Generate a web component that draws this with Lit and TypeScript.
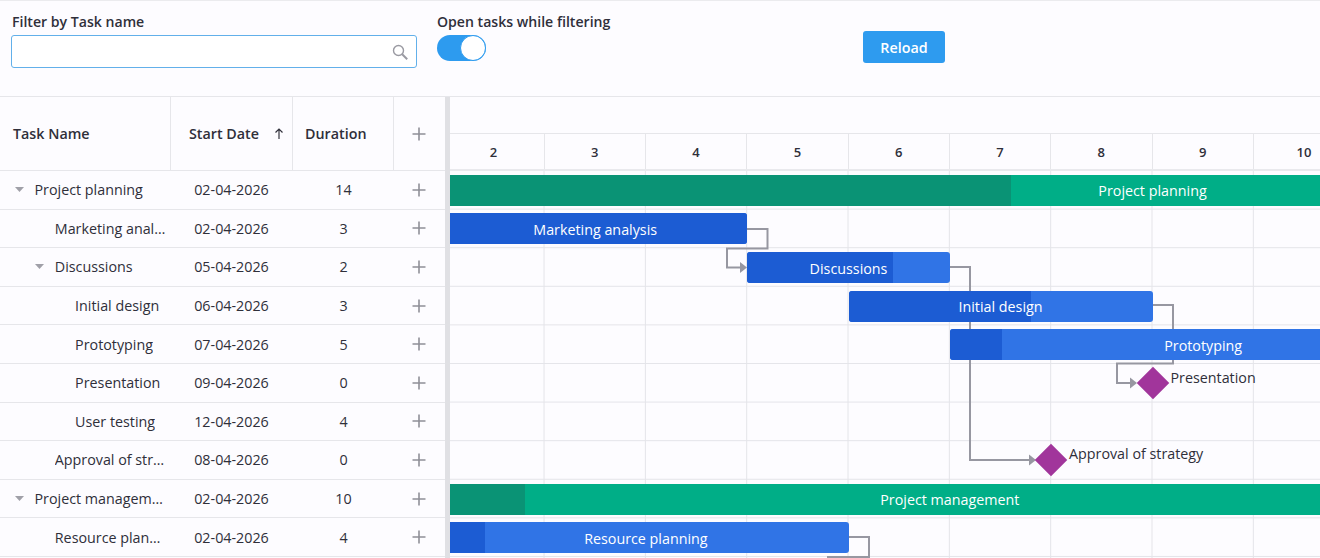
import { LitElement, html, css, svg } from "lit";
import { customElement } from "lit/decorators.js";

const ROW = 38.6;
const DAY = 101.33;
const ORIGIN = -6.8;
const BAR_INSET = 3.8;

interface Task { name: string; date: string; dur: number; level: number; open?: boolean; }
const TASKS: Task[] = [
  { name: "Project planning", date: "02-04-2026", dur: 14, level: 0, open: true },
  { name: "Marketing analysis", date: "02-04-2026", dur: 3, level: 1 },
  { name: "Discussions", date: "05-04-2026", dur: 2, level: 1, open: true },
  { name: "Initial design", date: "06-04-2026", dur: 3, level: 2 },
  { name: "Prototyping", date: "07-04-2026", dur: 5, level: 2 },
  { name: "Presentation", date: "09-04-2026", dur: 0, level: 2 },
  { name: "User testing", date: "12-04-2026", dur: 4, level: 2 },
  { name: "Approval of strategy", date: "08-04-2026", dur: 0, level: 1 },
  { name: "Project management", date: "02-04-2026", dur: 10, level: 0, open: true },
  { name: "Resource planning", date: "02-04-2026", dur: 4, level: 1 },
];

interface Bar { row: number; name: string; start: number; days: number; progress: number; kind: "project" | "task"; }
const BARS: Bar[] = [
  { row: 0, name: "Project planning", start: 0, days: 14, progress: 568, kind: "project" },
  { row: 1, name: "Marketing analysis", start: 0, days: 3, progress: 304, kind: "task" },
  { row: 2, name: "Discussions", start: 3, days: 2, progress: 146, kind: "task" },
  { row: 3, name: "Initial design", start: 4, days: 3, progress: 182, kind: "task" },
  { row: 4, name: "Prototyping", start: 5, days: 5, progress: 52, kind: "task" },
  { row: 8, name: "Project management", start: 0, days: 10, progress: 82, kind: "project" },
  { row: 9, name: "Resource planning", start: 0, days: 4, progress: 42, kind: "task" },
];

const MILESTONES = [
  { name: "Presentation", cx: 703, cy: 212, lx: 720.5, ly: 205.5 },
  { name: "Approval of strategy", cx: 601.3, cy: 289, lx: 619, ly: 282 },
];

const DAYS = [2, 3, 4, 5, 6, 7, 8, 9, 10];

const plus = html`<svg class="plus" width="14" height="14" viewBox="0 0 14 14"><path d="M7 .5v13M.5 7h13" fill="none" stroke="#8f8f98" stroke-width="1.6"/></svg>`;

@customElement("app-root")
export class AppRoot extends LitElement {
  static styles = css`
    :host { display: block; width: 1320px; height: 558px; overflow: hidden; background: #fdfcff; color: #2f2f3a;
      font-family: "Open Sans", "Liberation Sans", sans-serif; font-size: 14.3px; }
    * { box-sizing: border-box; }
    .toolbar { height: 97px; border-top: 1px solid #ebebee; border-bottom: 1px solid #e6e6ea; display: flex; align-items: flex-start; padding: 12px 0 0 11px; }
    .field { display: flex; flex-direction: column; gap: 5px; }
    .label { font-weight: 600; font-size: 14.1px; line-height: 17px; height: 17px; padding-left: 1px; white-space: nowrap; }
    .filter { width: 406px; }
    .input { height: 33px; border: 1px solid #62b0ea; border-radius: 3px; background: #fff; display: flex; align-items: center; justify-content: flex-end; padding-right: 8px; }
    .toggle-field { margin-left: 20px; width: 426px; }
    .toggle-field .label { padding-left: 0; }
    .toggle { width: 49px; height: 26px; border-radius: 13px; background: #2d9bef; display: flex; justify-content: flex-end; }
    .knob { width: 26px; height: 26px; border-radius: 50%; background: #fff; border: 1px solid #2d9bef; }
    .reload { height: 32px; width: 82px; margin-top: 18px; border: 0; border-radius: 3px; background: #2e9bef; color: #fff; font: 600 14.3px "Open Sans", sans-serif; }
    .gantt { display: flex; height: 461px; }
    .grid { width: 445px; flex: none; }
    .head, .row { display: grid; grid-template-columns: 171px 122px 101px 51px; }
    .head { height: 74px; border-bottom: 1px solid #e6e6ea; font-weight: 600; }
    .head > div { display: flex; align-items: center; border-right: 1px solid #e6e6ea; position: relative; }
    .head > div:last-child { border-right: 0; justify-content: center; padding-right: 1px; }
    .h-name { padding-left: 13px; }
    .h-date { padding-left: 18px; gap: 15px; }
    .h-dur { padding-left: 12px; }
    .row { height: ${ROW}px; border-bottom: 1px solid #e6e6ea; align-items: center; }
    .name { display: flex; align-items: center; min-width: 0; padding-right: 4px; }
    .name span { overflow: hidden; text-overflow: ellipsis; white-space: nowrap; min-width: 0; }
    .tree { flex: none; width: 9px; height: 5px; margin-right: 11px; }
    .tree.leaf { visibility: hidden; }
    .date, .dur { text-align: center; }
    .date { padding-right: 1px; }
    .add { display: flex; justify-content: center; padding-right: 1px; }
    .splitter { width: 5px; flex: none; background: #e0e0e4; }
    .chart { flex: 1; min-width: 0; overflow: hidden; display: flex; flex-direction: column; }
    .scale-top { height: 37px; flex: none; border-bottom: 1px solid #e6e6ea; }
    .scale { height: 37px; flex: none; display: flex; margin-left: ${ORIGIN}px; border-bottom: 2px solid #e9e9ed; font-weight: 600; font-size: 13px; }
    .scale div { flex: none; width: ${DAY}px; border-right: 1px solid #e6e6ea; display: flex; align-items: center; justify-content: center; }
    .canvas { position: relative; flex: 1; overflow: hidden;
      background-image:
        linear-gradient(to right, transparent calc(100% - 1px), #e4e4e9 calc(100% - 1px)),
        linear-gradient(to bottom, transparent calc(100% - 1px), #e4e4e9 calc(100% - 1px));
      background-size: ${DAY}px ${ROW}px;
      background-position: ${ORIGIN}px 0; }
    .links { position: absolute; left: 0; top: 0; }
    .bar { position: absolute; height: 31px; overflow: hidden; display: flex; align-items: center; justify-content: center; color: #fff; border-radius: 3px; }
    .bar.task { background: #3074e6; }
    .bar.project { background: #00ae87; border-radius: 0; }
    .progress { position: absolute; left: 0; top: 0; bottom: 0; }
    .task .progress { background: #1c5cd3; }
    .project .progress { background: #0a9375; }
    .bar-label { position: relative; white-space: nowrap; padding-top: 1px; }
    .diamond { position: absolute; width: 23px; height: 23px; background: #a1359b; transform: translate(-50%, -50%) rotate(45deg); }
    .ms-label { position: absolute; white-space: nowrap; line-height: 17px; transform: translateY(-50%); }
  `;

  render() {
    return html`
      <div class="toolbar">
        <div class="field filter">
          <div class="label">Filter by Task name</div>
          <div class="input">
            <svg width="16" height="16" viewBox="0 0 16 16" fill="none" stroke="#9a9aa2">
              <circle cx="6.5" cy="6.5" r="5" stroke-width="1.4"/><path d="M10.2 10.2l5 5" stroke-width="2"/>
            </svg>
          </div>
        </div>
        <div class="field toggle-field">
          <div class="label">Open tasks while filtering</div>
          <div class="toggle"><div class="knob"></div></div>
        </div>
        <button class="reload">Reload</button>
      </div>
      <div class="gantt">
        <div class="grid">
          <div class="head">
            <div class="h-name">Task Name</div>
            <div class="h-date">Start Date
              <svg width="10" height="11" viewBox="0 0 10 11" fill="none" stroke="#33333d" stroke-width="1.2"><path d="M5 11V1M1.500 4.500L5 1l3.500 3.500"/></svg>
            </div>
            <div class="h-dur">Duration</div>
            <div>${plus}</div>
          </div>
          ${TASKS.map((t) => html`
            <div class="row">
              <div class="name" style="padding-left:${14.5 + t.level * 20.3}px">
                <svg class="tree ${t.open ? "" : "leaf"}" viewBox="0 0 9 5"><path d="M0 0h9L4.500 5z" fill="#a0a0a8"/></svg>
                <span>${t.name}</span>
              </div>
              <div class="date">${t.date}</div>
              <div class="dur">${t.dur}</div>
              <div class="add">${plus}</div>
            </div>`)}
        </div>
        <div class="splitter"></div>
        <div class="chart">
          <div class="scale-top"></div>
          <div class="scale">${DAYS.map((d) => html`<div>${d}</div>`)}</div>
          <div class="canvas">
            <svg class="links" width="870" height="387" fill="none">
              ${svg`<g stroke="#9797a1" stroke-width="2">
                <path d="M297 58H317.500V77.500H277V96.500H292"/>
                <path d="M500 96H520V289H580"/>
                <path d="M702 134H723V192.500H667V212H682"/>
                <path d="M398 366H419V386H378V400"/>
              </g>
              <g fill="#9797a1">
                <path d="M290 91l7 5.500-7 5.500z"/>
                <path d="M579 283.500l7 5.500-7 5.500z"/>
                <path d="M680 206.500l7 5.500-7 5.500z"/>
              </g>`}
            </svg>
            ${BARS.map((b) => html`
              <div class="bar ${b.kind}" style="left:${ORIGIN + b.start * DAY}px;top:${b.row * ROW + BAR_INSET}px;width:${b.days * DAY}px">
                <div class="progress" style="width:${b.progress}px"></div>
                <span class="bar-label">${b.name}</span>
              </div>`)}
            ${MILESTONES.map((m) => html`
              <div class="diamond" style="left:${m.cx}px;top:${m.cy}px"></div>
              <div class="ms-label" style="left:${m.lx}px;top:${m.ly}px">${m.name}</div>`)}
          </div>
        </div>
      </div>
    `;
  }
}
